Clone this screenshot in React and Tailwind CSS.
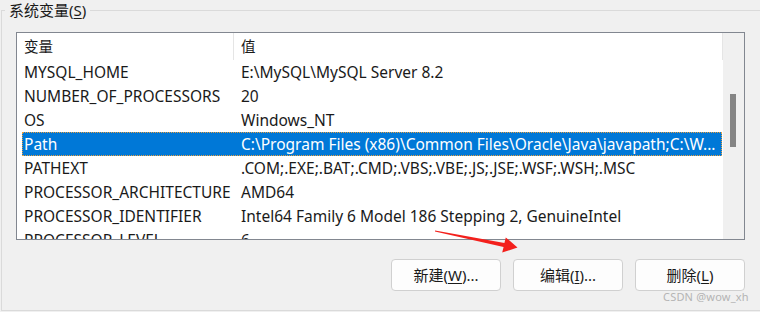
import React from 'react';

const rows = [
  { name: 'MYSQL_HOME', value: 'E:\\MySQL\\MySQL Server 8.2' },
  { name: 'NUMBER_OF_PROCESSORS', value: '20' },
  { name: 'OS', value: 'Windows_NT' },
  { name: 'Path', value: 'C:\\Program Files (x86)\\Common Files\\Oracle\\Java\\javapath;C:\\W...', selected: true },
  { name: 'PATHEXT', value: '.COM;.EXE;.BAT;.CMD;.VBS;.VBE;.JS;.JSE;.WSF;.WSH;.MSC' },
  { name: 'PROCESSOR_ARCHITECTURE', value: 'AMD64' },
  { name: 'PROCESSOR_IDENTIFIER', value: 'Intel64 Family 6 Model 186 Stepping 2, GenuineIntel' },
  { name: 'PROCESSOR_LEVEL', value: '6' },
];

function Button({ label, mnemonic, dots }) {
  return (
    <button className="w-[110px] h-[32px] rounded-[4px] border border-[#d0d0d0] bg-[#fdfdfd] text-[15px] text-[#1a1a1a] flex items-center justify-center">
      {label}(<span className="underline underline-offset-2">{mnemonic}</span>){dots ? '...' : ''}
    </button>
  );
}

export default function App() {
  return (
    <div
      className="relative w-[760px] h-[312px] bg-[#f0f0f0] overflow-hidden"
      style={{ fontFamily: '"Noto Sans", "Noto Sans CJK SC", sans-serif' }}
    >
      <fieldset className="ml-[1px] w-[800px] h-[311px] border border-[#dadada]">
        <legend className="ml-[3px] px-[4px] h-[20px] leading-[20px] text-[15px] text-[#1a1a1a]">
          系统变量(<span className="underline underline-offset-2">S</span>)
        </legend>

        <div className="ml-[14px] mt-[12px] w-[729px]">
          {/* list view */}
          <div className="flex h-[208px] border border-[#828790] bg-white">
            <div className="w-[706px] overflow-hidden">
              <div className="flex h-[27px] items-center text-[14.5px] text-[#1a1a1a]">
                <div className="w-[217px] h-full pl-[7px] flex items-center border-r border-[#e5e5e5]">变量</div>
                <div className="flex-1 h-full pl-[7px] flex items-center border-r border-[#e5e5e5]">值</div>
              </div>
              {rows.map((r) => (
                <div
                  key={r.name}
                  className={
                    r.selected
                      ? 'flex h-[24px] pt-[2px] items-center ml-[5px] mr-[1px] bg-[#0078d7] text-white text-[15.5px] whitespace-nowrap border border-dotted border-[#e8a040]'
                      : 'flex h-[24px] pt-[2px] items-center ml-[5px] mr-[1px] text-[#1a1a1a] text-[15.5px] whitespace-nowrap border border-transparent'
                  }
                >
                  <div className="w-[212px] pl-[1px] overflow-hidden">{r.name}</div>
                  <div className="flex-1 pl-[6px] overflow-hidden">{r.value}</div>
                </div>
              ))}
            </div>
            {/* scrollbar */}
            <div className="w-[21px] bg-[#f0f0f0] pl-[7px] pt-[61px]">
              <div className="w-[6px] h-[53px] bg-[#858585]" />
            </div>
          </div>

          <div className="flex justify-end gap-[12px] mt-[19px]">
            <Button label="新建" mnemonic="W" dots />
            <Button label="编辑" mnemonic="I" dots />
            <Button label="删除" mnemonic="L" />
          </div>
        </div>
      </fieldset>

      <div className="absolute left-[663px] top-[289px] text-[11px] tracking-[0.2px] text-[#b4b4b4]">CSDN @wow_xh</div>

      <svg className="absolute inset-0 pointer-events-none" width="760" height="312" viewBox="0 0 760 312">
        <polygon
          fill="#f3201c"
          points="434.9,231.5 503.6,247 502.2,252.6 517.5,247.6 505.8,237.4 504.4,243 435.1,230.5"
        />
      </svg>
    </div>
  );
}
